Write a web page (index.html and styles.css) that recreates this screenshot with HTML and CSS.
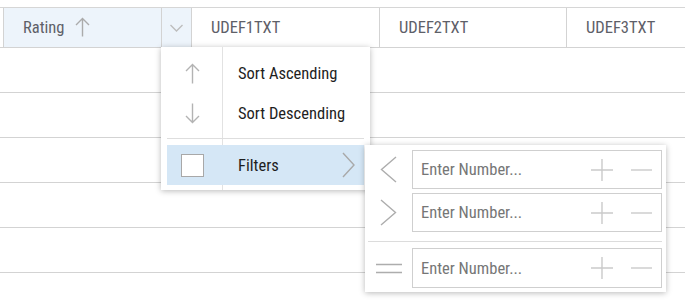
FILE: index.html
```html
<!DOCTYPE html>
<html lang="en">
<head>
  <meta charset="UTF-8">
  <meta name="viewport" content="width=device-width, initial-scale=1.0">
  <title>Rating Column Menu</title>
  <link rel="stylesheet" href="styles.css">
</head>
<body>
  <div class="page">
    <div class="grid">
      <div class="grid-head">
        <div class="hcell hcell-edge"></div>
        <div class="hcell hcell-rating">
          <span>Rating</span>
          <svg class="sort-icon" width="15" height="20" viewBox="0 0 15 20"><path d="M7.5 1.5V19.5M1 8L7.5 1.5L14 8" fill="none" stroke="#ababab" stroke-width="1.4"/></svg>
        </div>
        <div class="hcell hcell-menu">
          <svg width="13" height="8" viewBox="0 0 13 8"><path d="M0.5 1L6.5 7L12.5 1" fill="none" stroke="#bdbdbd" stroke-width="1.4"/></svg>
        </div>
        <div class="hcell hcell-col hcell-c1">UDEF1TXT</div>
        <div class="hcell hcell-col hcell-c2">UDEF2TXT</div>
        <div class="hcell hcell-col hcell-c3">UDEF3TXT</div>
      </div>
      <div class="grid-row"></div>
      <div class="grid-row"></div>
      <div class="grid-row"></div>
      <div class="grid-row"></div>
      <div class="grid-row"></div>
    </div>

    <!-- column menu -->
    <div class="col-menu">
      <div class="menu-item">
        <div class="menu-icon">
          <svg width="15" height="21" viewBox="0 0 15 21"><path d="M7.5 1.5V20.5M1 8L7.5 1.5L14 8" fill="none" stroke="#b3b3b3" stroke-width="1.4"/></svg>
        </div>
        <div class="menu-text">Sort Ascending</div>
      </div>
      <div class="menu-item">
        <div class="menu-icon">
          <svg width="15" height="21" viewBox="0 0 15 21"><path d="M7.5 0.5V19.5M1 13L7.5 19.5L14 13" fill="none" stroke="#b3b3b3" stroke-width="1.4"/></svg>
        </div>
        <div class="menu-text">Sort Descending</div>
      </div>
      <div class="menu-sep"></div>
      <div class="menu-item menu-item-active">
        <div class="menu-icon"><span class="check"></span></div>
        <div class="menu-text">Filters</div>
        <svg class="menu-arrow" width="13" height="26" viewBox="0 0 13 26"><path d="M1 1L12 13L1 25" fill="none" stroke="#a9a9a9" stroke-width="1.4"/></svg>
      </div>
    </div>

    <!-- filter submenu -->
    <div class="filter-menu">
      <div class="filter-row">
        <div class="filter-op">
          <svg width="17" height="27" viewBox="0 0 17 27"><path d="M16 1L1.5 13.5L16 26" fill="none" stroke="#adadad" stroke-width="1.4"/></svg>
        </div>
        <div class="num-input">
          <span class="placeholder">Enter Number...</span>
          <svg class="num-btn" width="22" height="22" viewBox="0 0 22 22"><path d="M11 0V22M0 11H22" fill="none" stroke="#cacaca" stroke-width="1.4"/></svg>
          <svg class="num-btn" width="21" height="22" viewBox="0 0 21 22"><path d="M0 11H21" fill="none" stroke="#cacaca" stroke-width="1.4"/></svg>
        </div>
      </div>
      <div class="filter-row">
        <div class="filter-op">
          <svg width="17" height="27" viewBox="0 0 17 27"><path d="M1 1L15.5 13.5L1 26" fill="none" stroke="#adadad" stroke-width="1.4"/></svg>
        </div>
        <div class="num-input">
          <span class="placeholder">Enter Number...</span>
          <svg class="num-btn" width="22" height="22" viewBox="0 0 22 22"><path d="M11 0V22M0 11H22" fill="none" stroke="#cacaca" stroke-width="1.4"/></svg>
          <svg class="num-btn" width="21" height="22" viewBox="0 0 21 22"><path d="M0 11H21" fill="none" stroke="#cacaca" stroke-width="1.4"/></svg>
        </div>
      </div>
      <div class="filter-sep"></div>
      <div class="filter-row">
        <div class="filter-op">
          <svg width="26" height="11" viewBox="0 0 26 11"><path d="M0 1.5H26M0 9.5H26" fill="none" stroke="#adadad" stroke-width="1.4"/></svg>
        </div>
        <div class="num-input">
          <span class="placeholder">Enter Number...</span>
          <svg class="num-btn" width="22" height="22" viewBox="0 0 22 22"><path d="M11 0V22M0 11H22" fill="none" stroke="#cacaca" stroke-width="1.4"/></svg>
          <svg class="num-btn" width="21" height="22" viewBox="0 0 21 22"><path d="M0 11H21" fill="none" stroke="#cacaca" stroke-width="1.4"/></svg>
        </div>
      </div>
    </div>
  </div>
</body>
</html>
```

FILE: styles.css
```css
body {
  margin: 0;
  padding: 0;
  background-color: #ffffff;
  font-family: 'Roboto Condensed', 'Open Sans', sans-serif;
}

.page {
  position: relative;
  width: 685px;
  height: 305px;
  overflow: hidden;
}

.grid {
  padding-top: 7px;
}

.grid-head {
  display: flex;
  height: 39px;
  border-top: 1px solid #d6d6d6;
  border-bottom: 1px solid #d3d3d3;
}

.hcell {
  display: flex;
  align-items: center;
  flex-shrink: 0;
  box-sizing: border-box;
  font-size: 16.5px;
  color: #5e6068;
}

.hcell-edge {
  width: 3px;
}

.hcell-rating {
  width: 158px;
  padding-left: 19px;
  border-left: 1px solid #d3d3d3;
  background-color: #edf4fb;
}

.sort-icon {
  margin-left: 11px;
  margin-top: -1px;
}

.hcell-menu {
  width: 30px;
  justify-content: center;
  border-left: 1px solid #d3d3d3;
  background-color: #edf4fb;
}

.hcell-col {
  padding-left: 19px;
  border-left: 1px solid #d3d3d3;
}

.hcell-c1 {
  width: 188px;
}

.hcell-c2 {
  width: 187px;
}

.hcell-c3 {
  flex: 1;
}

.grid-row {
  height: 44px;
  border-bottom: 1px solid #d3d3d3;
}

.grid-row:first-of-type {
  height: 45px;
}

/* column menu */
.col-menu {
  position: absolute;
  left: 161px;
  top: 47px;
  width: 209px;
  box-sizing: border-box;
  padding: 6px 6px 5px;
  background: linear-gradient(to right, transparent 61px, #e2e2e2 61px, #e2e2e2 62px, transparent 62px), #ffffff;
  box-shadow: 0 1px 6px rgba(0, 0, 0, 0.28);
  z-index: 2;
}

.menu-item {
  display: flex;
  align-items: center;
  height: 40px;
}

.menu-icon {
  width: 51px;
  display: flex;
  justify-content: center;
  align-items: center;
}

.menu-text {
  flex: 1;
  padding-left: 20px;
  font-size: 16.5px;
  color: #1e1e1e;
  white-space: nowrap;
}

.menu-sep {
  height: 1px;
  margin: 5px 0 6px;
  background-color: #dedede;
}

.menu-item-active {
  background-color: #d5e7f6;
}

.check {
  width: 21px;
  height: 21px;
  background-color: #ffffff;
  border: 1px solid #a8a8a8;
}

.menu-arrow {
  margin-right: 9px;
}

/* filter submenu */
.filter-menu {
  position: absolute;
  left: 365px;
  top: 145px;
  width: 301px;
  box-sizing: border-box;
  padding: 5px 4px 4px 0;
  background-color: #ffffff;
  box-shadow: 0 1px 6px rgba(0, 0, 0, 0.28);
  z-index: 3;
}

.filter-row {
  display: flex;
  align-items: center;
  margin-bottom: 4px;
}

.filter-row:last-child {
  margin-bottom: 0;
}

.filter-op {
  width: 47px;
  display: flex;
  justify-content: center;
  align-items: center;
}

.num-input {
  flex: 1;
  height: 39px;
  box-sizing: border-box;
  display: flex;
  align-items: center;
  padding: 0 9px 0 8px;
  border: 1px solid #cfcfcf;
}

.filter-row:last-child .num-input {
  height: 40px;
}

.placeholder {
  flex: 1;
  font-size: 16.5px;
  color: #767676;
  white-space: nowrap;
}

.num-btn + .num-btn {
  margin-left: 18px;
}

.filter-sep {
  height: 1px;
  margin: 9px 0 6px 3px;
  background-color: #dcdcdc;
}
```
